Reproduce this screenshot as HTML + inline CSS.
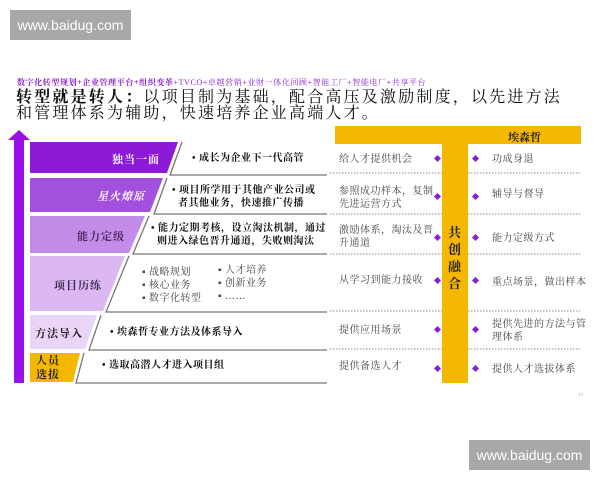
<!DOCTYPE html>
<html><head><meta charset="utf-8"><style>
*{margin:0;padding:0}
body{width:600px;height:480px;background:#fff;position:relative;overflow:hidden;font-family:"Liberation Serif","Noto Serif CJK SC",serif;color:#333}
.a{position:absolute;white-space:nowrap}
.wm{position:absolute;background:#a8a8a8;color:#fff;font-family:"Liberation Sans",sans-serif;font-size:14px;text-align:center;line-height:30px}
.lb{position:absolute;left:30px;color:#fff;font-size:11px;font-weight:bold;text-align:right;letter-spacing:1px}
.t{font-size:10px;line-height:13px;color:#444;letter-spacing:0.5px}
.b{font-size:10px;line-height:13px;color:#111;font-weight:bold;letter-spacing:0.5px}
.d{position:absolute;width:5px;height:5px;background:#8a1fd0;transform:rotate(45deg)}
</style></head><body>
<div class="wm" style="left:10px;top:10px;width:121px;height:30px">www.baidug.com</div>
<div class="wm" style="left:469px;top:440px;width:121px;height:30px">www.baidug.com</div>

<div class="a" style="left:17px;top:77px;font-size:8px;color:#8a1fd0;font-weight:bold;letter-spacing:0.6px">数字化转型规划+企业管理平台+组织变革<span style="font-weight:normal">+TVCO+卓越营销+业财一体化回顾+智能工厂+智能电厂+共享平台</span></div>
<div class="a" style="left:16px;top:90px;font-size:16px;line-height:16px;color:#111;letter-spacing:2.2px"><b>转型就是转人：</b>以项目制为基础，配合高压及激励制度，以先进方法</div>
<div class="a" style="left:16px;top:106px;font-size:16px;line-height:16px;color:#111;letter-spacing:2.2px">和管理体系为辅助，快速培养企业高端人才。</div>

<svg class="a" style="left:0;top:0" width="600" height="480">
<polygon points="19,130 8,140 14,140 14,383 24,383 24,140 30,140" fill="#9a10e8"/>
<polygon points="30,142 178,142 167,173 30,173" fill="#8c1ad6"/>
<polygon points="30,178 163,178 150,212 30,212" fill="#a450df"/>
<polygon points="30,216 145,216 129,253 30,253" fill="#c48ce9"/>
<polygon points="30,256 125,256 103,311 30,311" fill="#dcb8f2"/>
<polygon points="30,315 97,315 85,349 30,349" fill="#ead4f7"/>
<polygon points="30,353 80,353 73,382 30,382" fill="#f5b800"/>
<g stroke="#777" stroke-width="1.3" fill="none">
<polyline points="182,142 170,175 327,175"/>
<polyline points="167,178 154,214 327,214"/>
<polyline points="149,216 133,254 327,254"/>
<polyline points="129,256 106,312 327,312"/>
<polyline points="101,315 89,350 327,350"/>
<polyline points="84,353 76,383 327,383"/>
</g>
<g stroke="#888" stroke-width="1" stroke-dasharray="1.5,1.5">
<line x1="330" y1="173" x2="580" y2="173"/><line x1="330" y1="214" x2="580" y2="214"/>
<line x1="330" y1="254" x2="580" y2="254"/><line x1="330" y1="311" x2="580" y2="311"/>
<line x1="330" y1="349" x2="580" y2="349"/>
</g>
<rect x="335" y="126" width="246" height="18" fill="#f5b800"/>
<rect x="442" y="126" width="26" height="257" fill="#f5b800"/>
</svg>

<div class="lb" style="top:151px;width:130px">独当一面</div>
<div class="lb" style="top:188px;width:115px;font-style:italic">星火燎原</div>
<div class="lb" style="top:228px;width:95px;color:#4a2a60">能力定级</div>
<div class="lb" style="top:277px;width:72px;color:#3a2a50">项目历练</div>
<div class="lb" style="top:325px;width:53px;color:#222">方法导入</div>
<div class="lb" style="left:36px;top:354px;width:24px;color:#222;line-height:14px;text-align:center">人员<br>选拔</div>

<div class="a b" style="left:192px;top:152px">• 成长为企业下一代高管</div>
<div class="a b" style="left:172px;top:184px">• 项目所学用于其他产业公司或<br>&nbsp;&nbsp;者其他业务，快速推广传播</div>
<div class="a b" style="left:151px;top:222px">• 能力定期考核，设立淘汰机制，通过<br>&nbsp;&nbsp;则进入绿色晋升通道，失败则淘汰</div>
<div class="a t" style="left:142px;top:266px">▪ 战略规划<br>▪ 核心业务<br>▪ 数字化转型</div>
<div class="a t" style="left:218px;top:264px">▪ 人才培养<br>▪ 创新业务<br>▪ ……</div>
<div class="a b" style="left:110px;top:326px">• 埃森哲专业方法及体系导入</div>
<div class="a b" style="left:102px;top:359px">• 选取高潜人才进入项目组</div>

<div class="a" style="left:508px;top:129px;font-size:11px;font-weight:bold;color:#222">埃森哲</div>
<div class="a" style="left:448px;top:224px;font-size:13px;font-weight:bold;color:#222;line-height:17px;white-space:normal;width:14px">共创融合</div>

<div class="a t" style="left:339px;top:153px">给人才提供机会</div>
<div class="a t" style="left:339px;top:185px">参照成功样本，复制<br>先进运营方式</div>
<div class="a t" style="left:339px;top:224px">激励体系，淘汰及晋<br>升通道</div>
<div class="a t" style="left:339px;top:274px">从学习到能力接收</div>
<div class="a t" style="left:339px;top:324px">提供应用场景</div>
<div class="a t" style="left:339px;top:360px">提供备选人才</div>

<div class="a t" style="left:492px;top:153px">功成身退</div>
<div class="a t" style="left:492px;top:188px">辅导与督导</div>
<div class="a t" style="left:492px;top:232px">能力定级方式</div>
<div class="a t" style="left:492px;top:276px">重点场景，做出样本</div>
<div class="a t" style="left:492px;top:318px">提供先进的方法与管<br>理体系</div>
<div class="a t" style="left:492px;top:363px">提供人才选拔体系</div>

<div class="d" style="left:435px;top:156px"></div><div class="d" style="left:473px;top:156px"></div>
<div class="d" style="left:435px;top:194px"></div><div class="d" style="left:473px;top:194px"></div>
<div class="d" style="left:435px;top:235px"></div><div class="d" style="left:473px;top:235px"></div>
<div class="d" style="left:435px;top:278px"></div><div class="d" style="left:473px;top:278px"></div>
<div class="d" style="left:435px;top:327px"></div><div class="d" style="left:473px;top:327px"></div>
<div class="d" style="left:435px;top:366px"></div><div class="d" style="left:473px;top:366px"></div>
<div class="a" style="left:578px;top:393px;font-size:5px;color:#bbb">16</div>
</body></html>
